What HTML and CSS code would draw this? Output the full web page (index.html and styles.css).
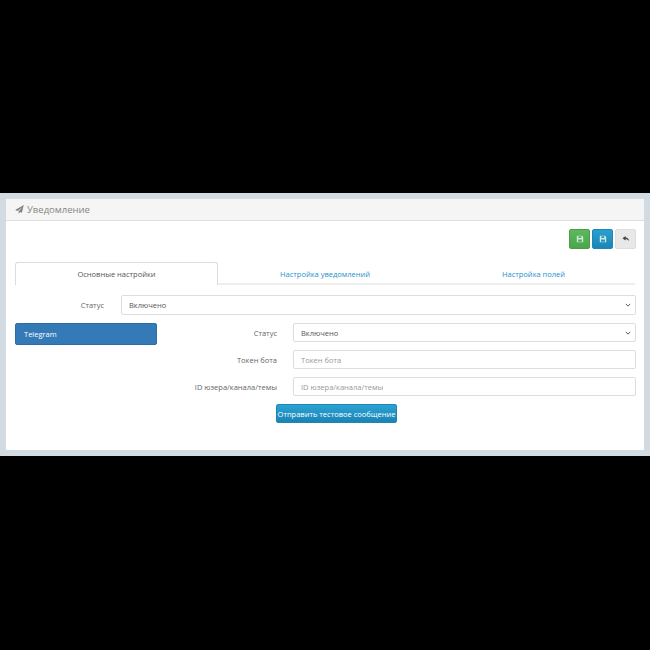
FILE: index.html
```html
<!DOCTYPE html>
<html lang="ru">
<head>
<meta charset="utf-8">
<title>Уведомление</title>
<link rel="stylesheet" href="styles.css">
</head>
<body>
<main class="band">
  <section class="panel">
    <header class="panel-head">
      <svg class="plane" viewBox="0 0 16 16" aria-hidden="true"><path d="M15.6.2 0.3 9l4.3 1.8L13.2 3.6 6.4 11.7v3.9l2.5-3.2 3.3 1.4z"/></svg>
      <h1 class="panel-title">Уведомление</h1>
    </header>
    <div class="panel-body">
      <div class="actions">
        <button class="icon-btn green" type="button" aria-label="Сохранить">
          <svg viewBox="0 0 10 10" aria-hidden="true"><path class="glyph" fill-rule="evenodd" d="M1 1h6.6L9 2.4V9H1zM3 1.6v2.2h3.6V1.6zM2.6 5.6V8.4h4.8V5.6z"/></svg>
        </button>
        <button class="icon-btn blue" type="button" aria-label="Сохранить и остаться">
          <svg viewBox="0 0 10 10" aria-hidden="true"><path class="glyph" fill-rule="evenodd" d="M1 1h6.6L9 2.4V9H1zM3 1.6v2.2h3.6V1.6zM2.6 5.6V8.4h4.8V5.6z"/></svg>
        </button>
        <button class="icon-btn grey" type="button" aria-label="Назад">
          <svg viewBox="0 0 10 10" aria-hidden="true"><path class="back" d="M4.4 1.4.6 4.2l3.8 2.8V5.2c2 0 3.4.5 4.4 2.6 0-2.8-1.4-4.6-4.4-4.8z"/></svg>
        </button>
      </div>
      <nav class="tabs">
        <a class="tab active">Основные настройки</a>
        <a class="tab">Настройка уведомлений</a>
        <a class="tab">Настройка полей</a>
      </nav>
      <div class="row top-row">
        <label class="label top-label">Статус</label>
        <div class="control select">Включено<svg class="chev" viewBox="0 0 8 5" aria-hidden="true"><path d="M1 1l3 3 3-3"/></svg></div>
      </div>
      <div class="split">
        <aside class="side">
          <a class="side-item">Telegram</a>
        </aside>
        <div class="fields">
          <div class="row">
            <label class="label">Статус</label>
            <div class="control select">Включено<svg class="chev" viewBox="0 0 8 5" aria-hidden="true"><path d="M1 1l3 3 3-3"/></svg></div>
          </div>
          <div class="row">
            <label class="label">Токен бота</label>
            <div class="control placeholder">Токен бота</div>
          </div>
          <div class="row">
            <label class="label">ID юзера/канала/темы</label>
            <div class="control placeholder">ID юзера/канала/темы</div>
          </div>
          <button class="send" type="button">Отправить тестовое сообщение</button>
        </div>
      </div>
    </div>
  </section>
</main>
</body>
</html>
```
FILE: styles.css
```css
* { box-sizing: border-box; }
html, body { margin: 0; height: 100%; background: #000; }
body {
  padding-top: 193px;
  font-family: "Open Sans", "Liberation Sans", sans-serif;
  font-size: 7.5px;
  color: #666;
}
.band {
  height: 263px;
  padding: 6px;
  background: #d2dae2;
}
.panel {
  height: 251px;
  background: #fff;
  border-radius: 1px;
}
.panel-head {
  height: 22px;
  display: flex;
  align-items: center;
  gap: 3px;
  padding-left: 9px;
  background: #f5f5f5;
  border-bottom: 1px solid #ddd;
}
.plane { width: 9px; height: 9px; fill: #808080; }
.panel-title { margin: 0; font-size: 9.5px; font-weight: 400; color: #858585; }
.panel-body { padding: 8px 9px 0; }
.actions { display: flex; justify-content: flex-end; gap: 2px; height: 20px; margin-right: -1px; }
.icon-btn {
  width: 21px; height: 20px; padding: 0;
  display: flex; align-items: center; justify-content: center;
  border-radius: 2px;
  border: 1px solid transparent;
}
.icon-btn svg { width: 8px; height: 8px; }
.green { background: linear-gradient(#5cb85c, #4aa64a); border-color: #4a9c4a; }
.blue { background: linear-gradient(#2a9fd0, #1b84b8); border-color: #1f86b5; }
.grey { background: #e8e8e8; border-color: #ddd; }
.glyph { fill: #cfe8d8; }
.back { fill: #444; }
.tabs {
  display: grid;
  grid-template-columns: 203px 214px 1fr;
  height: 23px;
  margin-top: 13px;
  border-bottom: 2px solid #eee;
  color: #1e91cf;
}
.tab { display: flex; align-items: center; justify-content: center; }
.active {
  height: 23px;
  background: #fff;
  color: #555;
  border: 1px solid #ddd;
  border-bottom: 0;
  border-radius: 3px 3px 0 0;
}
.row { display: flex; align-items: center; height: 19px; }
.label { flex: none; text-align: right; color: #666; }
.control {
  flex: 1;
  height: 100%;
  display: flex;
  align-items: center;
  justify-content: space-between;
  padding: 0 4px 0 7px;
  background: #fff;
  border: 1px solid #ddd;
  border-radius: 2px;
  color: #555;
}
.placeholder { color: #999; }
.chev { width: 6px; height: 4px; fill: none; stroke: #555; stroke-width: 1.3; }
.top-row { height: 20px; margin-top: 10px; margin-right: -1px; }
.top-label { width: 89px; margin-right: 17px; }
.split { display: flex; margin-top: 8px; }
.side { flex: none; width: 142px; margin-right: 16px; }
.side-item {
  display: flex;
  align-items: center;
  height: 22px;
  padding-left: 8px;
  background: #337ab7;
  border: 1px solid #2e6da4;
  border-radius: 2px;
  color: #fff;
}
.fields { flex: 1; display: flex; flex-direction: column; gap: 8px; margin-right: -1px; }
.fields .label { width: 104px; margin-right: 16px; }
.send {
  align-self: flex-start;
  width: 121px;
  height: 19px;
  margin-left: 103px;
  padding: 0;
  font: inherit;
  color: #fff;
  background: linear-gradient(#2aa3d3, #1b83b6);
  border: 1px solid #1f86b5;
  border-radius: 2px;
}
```
